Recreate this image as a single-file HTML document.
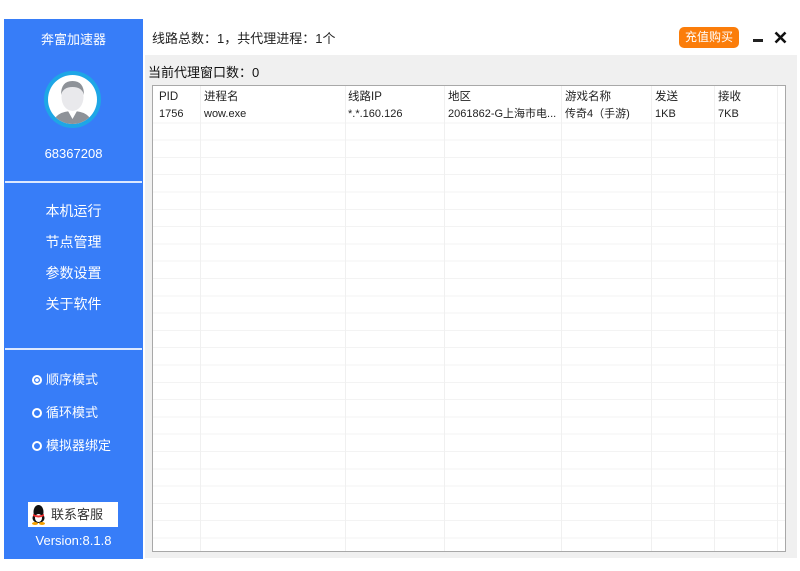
<!DOCTYPE html>
<html><head><meta charset="utf-8"><style>
*{margin:0;padding:0;box-sizing:border-box}
body{width:800px;height:571px;background:#fff;position:relative;overflow:hidden;font-family:"Liberation Sans","Noto Sans CJK SC",sans-serif;}
.side{position:absolute;left:4px;top:19px;width:139px;height:540px;background:#377df8;color:#fff;}
.abs{position:absolute}
.c{left:0;width:139px;text-align:center}
.hr{position:absolute;left:1px;width:137px;height:2px;background:#dce8ff}
.main{position:absolute;left:145px;top:55px;width:652px;height:503px;background:#f0f0f0}
.tbl{position:absolute;left:152px;top:85px;width:634px;height:467px;border:1px solid #a8a8a8;background:#fff;
background-image:repeating-linear-gradient(to bottom,transparent 0,transparent 16.3px,#f3f3f3 16.3px,#f3f3f3 17.3px);background-position:0 19.5px;background-repeat:no-repeat;background-size:100% 460px}
.col{position:absolute;top:0;bottom:0;width:1px;background:#f0f0f0}
.t{position:absolute;font-size:11.5px;line-height:14px;height:14px;color:#222;white-space:nowrap}
.radio{display:inline-block;width:10px;height:10px;border:2px solid #fff;border-radius:50%;vertical-align:middle;margin-right:4px;position:relative;top:-1px}
</style></head><body>
<div class="side">
 <div class="abs c" style="top:10px;font-size:13px">奔富加速器</div>
 <div class="abs" style="left:40px;top:52px;width:57px;height:57px;border-radius:50%;background:#1ea6e6;">
  <div style="position:absolute;left:4px;top:4px;width:49px;height:49px;border-radius:50%;background:#fff;overflow:hidden">
   <svg width="49" height="49" viewBox="0 0 49 49"><ellipse cx="24.5" cy="22" rx="11" ry="14" fill="#e9e9ec"/><path d="M13 20 Q13 6 24.5 6 Q36 6 36 20 Q34 12 24.5 12 Q15 12 13 20Z" fill="#8e9298"/><path d="M4 49 Q8 36 24.5 36 Q41 36 45 49Z" fill="#8e9298"/><path d="M20 36 L24.5 44 L29 36Z" fill="#fff"/></svg>
  </div>
 </div>
 <div class="abs c" style="top:127px;font-size:13px">68367208</div>
 <div class="hr" style="top:162px"></div>
 <div class="abs c" style="top:182px;font-size:14px">本机运行</div>
 <div class="abs c" style="top:213px;font-size:14px">节点管理</div>
 <div class="abs c" style="top:244px;font-size:14px">参数设置</div>
 <div class="abs c" style="top:275px;font-size:14px">关于软件</div>
 <div class="hr" style="top:329px"></div>
 <div class="abs" style="left:28px;top:350px;font-size:13px"><span class="radio" style="background:radial-gradient(circle,#fff 1.6px,transparent 2px)"></span>顺序模式</div>
 <div class="abs" style="left:28px;top:383px;font-size:13px"><span class="radio"></span>循环模式</div>
 <div class="abs" style="left:28px;top:416px;font-size:13px"><span class="radio"></span>模拟器绑定</div>
 <div class="abs" style="left:24px;top:483px;width:90px;height:25px;background:#fff;color:#333;font-size:13px;line-height:25px;padding-left:23px">
  <svg class="abs" style="left:3px;top:2px" width="15" height="21" viewBox="0 0 15 21"><ellipse cx="7.5" cy="8" rx="5" ry="7" fill="#111"/><ellipse cx="7.5" cy="14" rx="6" ry="5" fill="#111"/><ellipse cx="7.5" cy="14" rx="3.5" ry="4" fill="#fff"/><path d="M2 10 Q7.5 13 13 10 L13 12 Q7.5 15 2 12Z" fill="#e33"/><ellipse cx="4" cy="19.5" rx="3" ry="1.5" fill="#f5a000"/><ellipse cx="11" cy="19.5" rx="3" ry="1.5" fill="#f5a000"/></svg>联系客服</div>
 <div class="abs c" style="top:514px;font-size:13px">Version:8.1.8</div>
</div>
<div class="abs" style="left:152px;top:28px;font-size:13px;color:#222">线路总数：1，共代理进程：1个</div>
<div class="abs" style="left:679px;top:27px;width:60px;height:21px;background:#fb7d0a;border-radius:5px;color:#fff;font-size:12px;line-height:21px;text-align:center">充值购买</div>
<div class="abs" style="left:753px;top:39px;width:10px;height:3px;background:#222"></div>
<svg class="abs" style="left:774px;top:31px" width="13" height="13" viewBox="0 0 13 13"><path d="M1.5 1.5L11.5 11.5M11.5 1.5L1.5 11.5" stroke="#111" stroke-width="2.6"/></svg>
<div class="main"></div>
<div class="abs" style="left:148px;top:62px;font-size:13px;color:#111">当前代理窗口数：0</div>
<div class="tbl">
 <div class="col" style="left:47px"></div><div class="col" style="left:192px"></div><div class="col" style="left:291px"></div><div class="col" style="left:408px"></div><div class="col" style="left:498px"></div><div class="col" style="left:561px"></div><div class="col" style="left:624px"></div>
</div>
<div class="t" style="left:159px;top:90px">PID</div><div class="t" style="left:204px;top:90px">进程名</div><div class="t" style="left:348px;top:90px">线路IP</div><div class="t" style="left:448px;top:90px">地区</div><div class="t" style="left:565px;top:90px">游戏名称</div><div class="t" style="left:655px;top:90px">发送</div><div class="t" style="left:718px;top:90px">接收</div>
<div class="t" style="left:159px;top:107px;font-size:11px">1756</div><div class="t" style="left:204px;top:107px;font-size:11px">wow.exe</div><div class="t" style="left:348px;top:107px;font-size:11px">*.*.160.126</div><div class="t" style="left:448px;top:107px;font-size:11px">2061862-G上海市电...</div><div class="t" style="left:565px;top:107px;font-size:11px">传奇4（手游)</div><div class="t" style="left:655px;top:107px;font-size:11px">1KB</div><div class="t" style="left:718px;top:107px;font-size:11px">7KB</div>
</body></html>
